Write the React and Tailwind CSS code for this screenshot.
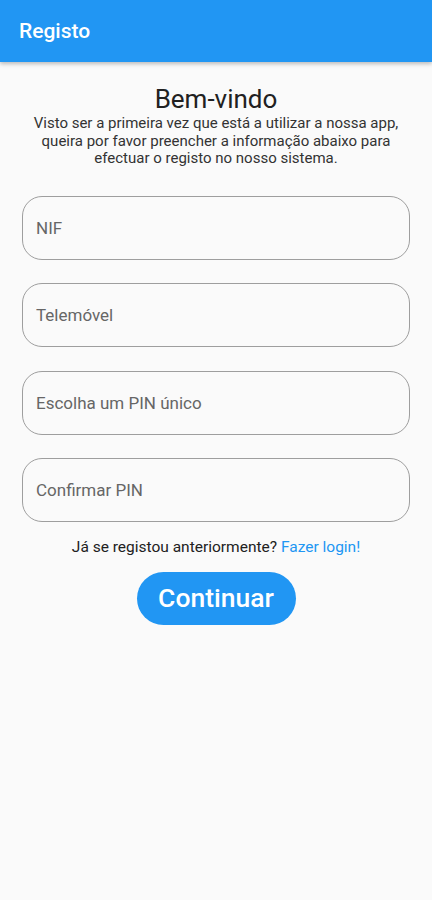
import React from 'react';

const fields = ['NIF', 'Telemóvel', 'Escolha um PIN único', 'Confirmar PIN'];

export default function App() {
  return (
    <div className="min-h-[900px] bg-[#fafafa] font-['Roboto',sans-serif]">
      <header className="h-[62px] bg-[#2196f3] flex items-center px-[19px] shadow-[0_2px_4px_rgba(0,0,0,0.25)]">
        <h1 className="text-white text-[21px] font-medium leading-none">Registo</h1>
      </header>

      <main className="flex flex-col items-center px-[22px]">
        <h2 className="mt-[22px] text-[26px] leading-[30px] text-[#212121]">Bem-vindo</h2>
        <p className="mt-[1px] text-center text-[15px] leading-[17.5px] text-[#333]">
          Visto ser a primeira vez que está a utilizar a nossa app, queira por favor preencher a informação abaixo para efectuar o registo no nosso sistema.
        </p>

        <div className="w-full mt-[28px] flex flex-col gap-[23.5px]">
          {fields.map((f) => (
            <input
              key={f}
              placeholder={f}
              className="w-full h-[64px] rounded-[20px] border border-[#9e9e9e] bg-transparent px-[13px] text-[17px] text-[#212121] placeholder:text-[#666] outline-none"
            />
          ))}
        </div>

        <p className="mt-[14.5px] text-[15.5px] leading-[20px] text-[#212121]">
          Já se registou anteriormente? <span className="text-[#2196f3]">Fazer login!</span>
        </p>

        <button className="mt-[15px] w-[159px] h-[53px] rounded-full bg-[#2196f3] text-white text-[26.5px] font-medium">
          Continuar
        </button>
      </main>
    </div>
  );
}
